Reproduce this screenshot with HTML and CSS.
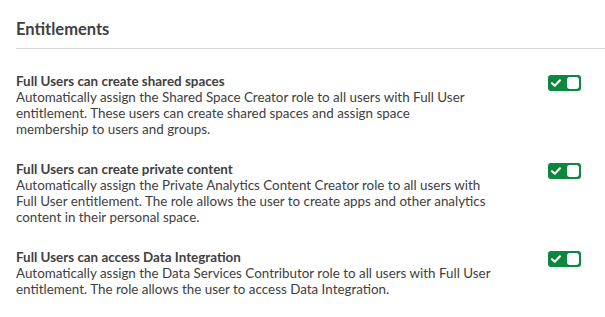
FILE: index.html
```html
<!DOCTYPE html>
<html lang="en">
<head>
<meta charset="utf-8">
<title>Entitlements</title>
<link rel="stylesheet" href="styles.css">
</head>
<body>
<section class="panel">
  <header class="panel-header">
    <h2 class="panel-title">Entitlements</h2>
  </header>
  <div class="settings">
    <div class="setting">
      <div class="setting-text">
        <div class="setting-title">Full Users can create shared spaces</div>
        <div class="setting-desc">Automatically assign the Shared Space Creator role to all users with Full User<br>entitlement. These users can create shared spaces and assign space<br>membership to users and groups.</div>
      </div>
      <div class="toggle" role="switch" aria-checked="true">
        <svg class="toggle-check" viewBox="0 0 10 8" width="10" height="8"><path d="M1 4.2 L3.8 6.8 L9 1.2" fill="none" stroke="#fff" stroke-width="2" stroke-linecap="round" stroke-linejoin="round"/></svg>
        <span class="toggle-knob"></span>
      </div>
    </div>
    <div class="setting">
      <div class="setting-text">
        <div class="setting-title">Full Users can create private content</div>
        <div class="setting-desc">Automatically assign the Private Analytics Content Creator role to all users with<br>Full User entitlement. The role allows the user to create apps and other analytics<br>content in their personal space.</div>
      </div>
      <div class="toggle" role="switch" aria-checked="true">
        <svg class="toggle-check" viewBox="0 0 10 8" width="10" height="8"><path d="M1 4.2 L3.8 6.8 L9 1.2" fill="none" stroke="#fff" stroke-width="2" stroke-linecap="round" stroke-linejoin="round"/></svg>
        <span class="toggle-knob"></span>
      </div>
    </div>
    <div class="setting">
      <div class="setting-text">
        <div class="setting-title">Full Users can access Data Integration</div>
        <div class="setting-desc">Automatically assign the Data Services Contributor role to all users with Full User<br>entitlement. The role allows the user to access Data Integration.</div>
      </div>
      <div class="toggle" role="switch" aria-checked="true">
        <svg class="toggle-check" viewBox="0 0 10 8" width="10" height="8"><path d="M1 4.2 L3.8 6.8 L9 1.2" fill="none" stroke="#fff" stroke-width="2" stroke-linecap="round" stroke-linejoin="round"/></svg>
        <span class="toggle-knob"></span>
      </div>
    </div>
  </div>
</section>
</body>
</html>
```
FILE: styles.css
```css
* { box-sizing: border-box; }
html, body {
  margin: 0;
  padding: 0;
  background: #fff;
}
body {
  font-family: Lato, "Open Sans", sans-serif;
  color: #404040;
}
.panel {
  padding-left: 16px;
}
.panel-header {
  height: 49px;
  border-bottom: 1px solid #d9d9d9;
  padding-top: 19px;
}
.panel-title {
  margin: 0;
  font-size: 16.5px;
  line-height: 20px;
  font-weight: 700;
  color: #404040;
}
.settings {
  display: flex;
  flex-direction: column;
  gap: 24px;
  padding-top: 24px;
  padding-right: 24px;
}
.setting {
  display: flex;
  justify-content: space-between;
  align-items: flex-start;
}
.setting-text {
  font-size: 13.4px;
  line-height: 16px;
}
.setting-title {
  font-weight: 700;
}
.setting-desc {
  font-weight: 400;
}
.toggle {
  margin-top: 2px;
  width: 33px;
  height: 16px;
  border-radius: 3px;
  background: #0d873d;
  display: flex;
  align-items: center;
  justify-content: space-between;
  padding: 0 2px 0 3px;
  flex-shrink: 0;
}
.toggle-check {
  display: block;
}
.toggle-knob {
  width: 12px;
  height: 12px;
  border-radius: 3px;
  background: #fff;
}
```
